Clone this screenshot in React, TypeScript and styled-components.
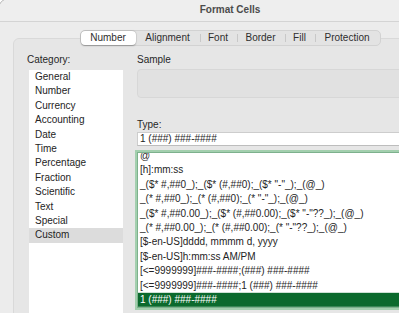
import React from "react";
import styled, { createGlobalStyle } from "styled-components";

const GlobalStyle = createGlobalStyle`
  html, body {
    margin: 0;
    padding: 0;
    overflow: hidden;
    background: #ffffff;
  }
  * {
    box-sizing: border-box;
  }
`;

const Window = styled.div`
  margin: -2px 0 0 -2px;
  width: 464px;
  height: 330px;
  border: 1px solid #a9a9a9;
  border-radius: 11px 0 0 0;
  background: #ececec;
  font-family: "Liberation Sans", Helvetica, Arial, sans-serif;
  font-size: 10px;
  color: #242424;
  overflow: hidden;
`;

const TitleBar = styled.div`
  height: 23px;
  line-height: 22px;
  text-align: center;
  font-weight: bold;
  color: #4b4b4b;
  border-bottom: 1px solid #d4d4d4;
  background: #eeeeee;
`;

const TabsRow = styled.div`
  position: relative;
  z-index: 1;
  display: flex;
  justify-content: center;
  margin-top: 8px;
`;

const TabGroup = styled.div`
  display: flex;
  height: 16px;
  border: 1px solid #d2d2d2;
  border-radius: 5px;
  background: #e3e3e3;
`;

const Tab = styled.div<{ $w: number; $active?: boolean; $divider?: boolean }>`
  position: relative;
  width: ${(p) => p.$w}px;
  display: flex;
  align-items: center;
  justify-content: center;
  line-height: 14px;
  color: #2e2e2e;
  border-radius: 4px;
  background: ${(p) => (p.$active ? "#ffffff" : "transparent")};
  box-shadow: ${(p) =>
    p.$active ? "0 0.5px 1.5px rgba(0,0,0,0.28), 0 0 0 0.5px rgba(0,0,0,0.08)" : "none"};
  &::before {
    content: "";
    display: ${(p) => (p.$divider ? "block" : "none")};
    position: absolute;
    left: 0;
    top: 3px;
    width: 1px;
    height: 8px;
    background: #c8c8c8;
  }
`;

const Panel = styled.div`
  margin: -8px 14px 0 14px;
  padding: 15px 13px 0 13px;
  height: 300px;
  border: 1px solid #d9d9d9;
  border-radius: 6px;
  background: #e6e6e6;
  display: flex;
`;

const LeftCol = styled.div`
  width: 110px;
  flex-shrink: 0;
  display: flex;
  flex-direction: column;
`;

const RightCol = styled.div`
  flex: 1;
  display: flex;
  flex-direction: column;
`;

const Label = styled.div<{ $top?: number }>`
  line-height: 12px;
  margin-top: ${(p) => p.$top ?? 0}px;
  color: #262626;
`;

const CategoryBox = styled.div`
  margin: 4px 0 0 2px;
  width: 94px;
  height: 260px;
  background: #ffffff;
`;

const CategoryItem = styled.div<{ $selected?: boolean }>`
  height: 14.4px;
  line-height: 14.4px;
  padding-left: 6px;
  white-space: nowrap;
  background: ${(p) => (p.$selected ? "#dcdcdc" : "transparent")};
`;

const SampleBox = styled.div`
  margin-top: 3px;
  height: 29px;
  border: 1px solid #d7d7d7;
  border-radius: 4px;
  background: #e1e1e1;
`;

const TypeInput = styled.div`
  margin-top: 1px;
  height: 14px;
  line-height: 12px;
  padding-left: 2px;
  border: 1px solid #cdcdcd;
  border-bottom-color: #bdbdbd;
  background: #ffffff;
  white-space: nowrap;
`;

const FormatList = styled.div`
  margin-top: 6px;
  height: 156px;
  border: 1px solid #7db18d;
  box-shadow: 0 0 0 2px #a3cfae;
  background: #ffffff;
  overflow: hidden;
`;

const FormatRows = styled.div`
  transform: translateY(-4.2px);
`;

const FormatRow = styled.div<{ $selected?: boolean }>`
  height: 14.4px;
  line-height: 14.4px;
  padding-left: 2px;
  white-space: nowrap;
  color: ${(p) => (p.$selected ? "#ffffff" : "#242424")};
  background: ${(p) => (p.$selected ? "#0b6a2d" : "transparent")};
`;

const tabs = [
  { name: "Number", w: 55 },
  { name: "Alignment", w: 64 },
  { name: "Font", w: 37 },
  { name: "Border", w: 48 },
  { name: "Fill", w: 30 },
  { name: "Protection", w: 65 },
];

const categories = [
  "General",
  "Number",
  "Currency",
  "Accounting",
  "Date",
  "Time",
  "Percentage",
  "Fraction",
  "Scientific",
  "Text",
  "Special",
  "Custom",
];

const formats = [
  "@",
  "[h]:mm:ss",
  '_($* #,##0_);_($* (#,##0);_($* "-"_);_(@_)',
  '_(* #,##0_);_(* (#,##0);_(* "-"_);_(@_)',
  '_($* #,##0.00_);_($* (#,##0.00);_($* "-"??_);_(@_)',
  '_(* #,##0.00_);_(* (#,##0.00);_(* "-"??_);_(@_)',
  "[$-en-US]dddd, mmmm d, yyyy",
  "[$-en-US]h:mm:ss AM/PM",
  "[<=9999999]###-####;(###) ###-####",
  "[<=9999999]###-####;1 (###) ###-####",
  "1 (###) ###-####",
];

const App = () => {
  return (
    <>
      <GlobalStyle />
      <Window>
        <TitleBar>Format Cells</TitleBar>
        <TabsRow>
          <TabGroup>
            {tabs.map((t, i) => (
              <Tab key={t.name} $w={t.w} $active={i === 0} $divider={i > 1}>
                {t.name}
              </Tab>
            ))}
          </TabGroup>
        </TabsRow>
        <Panel>
          <LeftCol>
            <Label>Category:</Label>
            <CategoryBox>
              {categories.map((c) => (
                <CategoryItem key={c} $selected={c === "Custom"}>
                  {c}
                </CategoryItem>
              ))}
            </CategoryBox>
          </LeftCol>
          <RightCol>
            <Label>Sample</Label>
            <SampleBox />
            <Label $top={21}>Type:</Label>
            <TypeInput>1 (###) ###-####</TypeInput>
            <FormatList>
              <FormatRows>
                {formats.map((f, i) => (
                  <FormatRow key={f} $selected={i === formats.length - 1}>
                    {f}
                  </FormatRow>
                ))}
              </FormatRows>
            </FormatList>
          </RightCol>
        </Panel>
      </Window>
    </>
  );
};

export default App;
